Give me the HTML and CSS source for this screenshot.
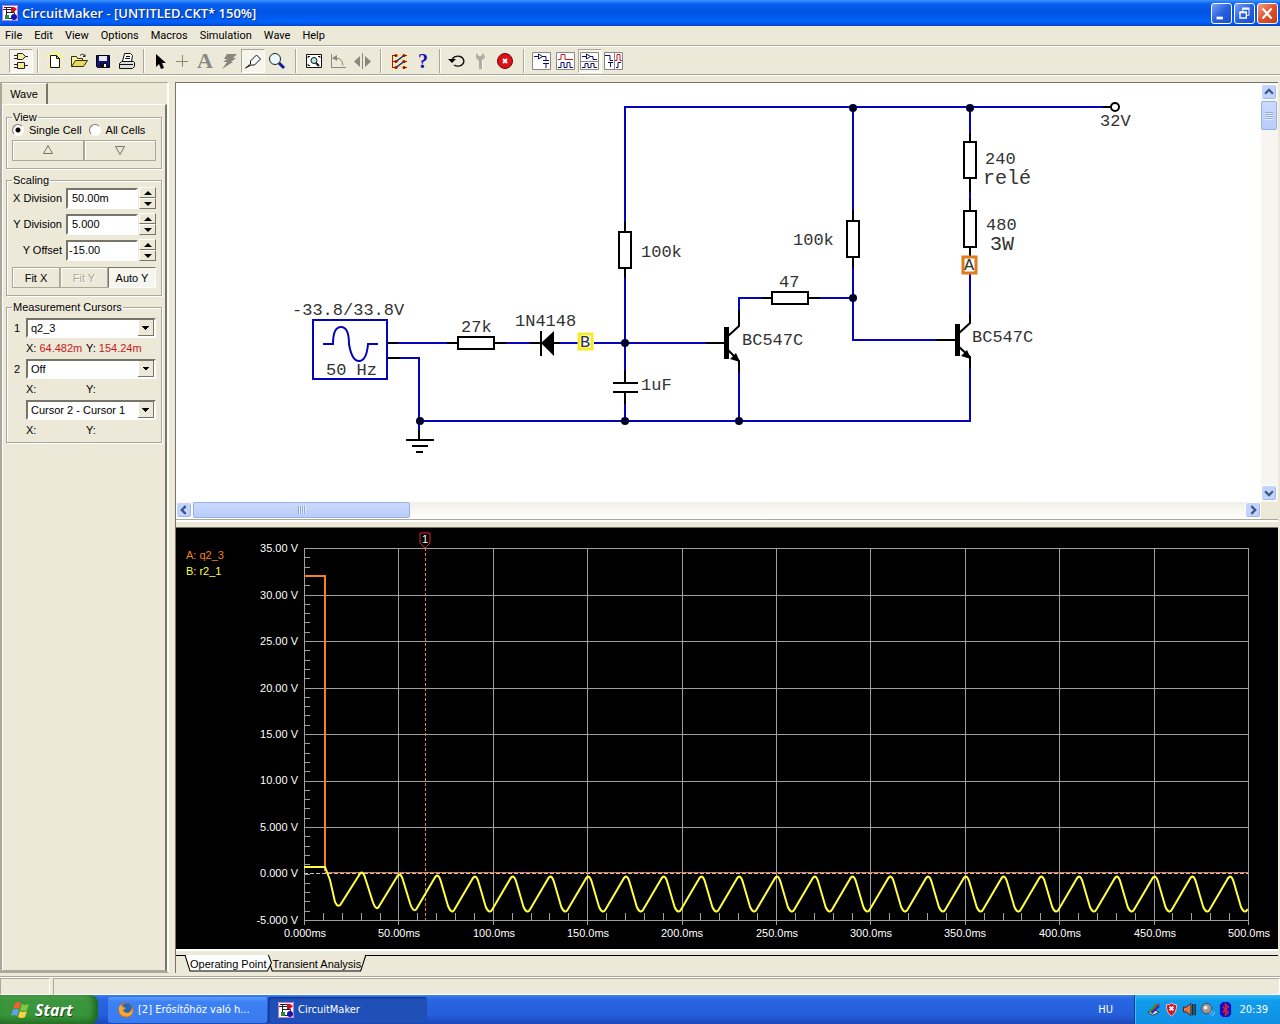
FILE: index.html
```html
<!DOCTYPE html>
<html lang="en">
<head>
<meta charset="utf-8">
<title>CircuitMaker - [UNTITLED.CKT* 150%]</title>
<link rel="stylesheet" href="styles.css">
</head>
<body>
<svg class="defs" aria-hidden="true">
  <symbol id="app-icon" viewBox="0 0 16 16">
    <path fill="#fff" d="M0 0h16v16H0z"/><path fill="none" stroke="#d070d0" d="M.5.5h15v15H.5z"/>
    <path fill="none" stroke="#222" d="M1 4.500h9M4.500 2v11M4 7.500h8.500v3M2 2.500h8M5 13.500h5"/>
    <path fill="#d01020" d="M9 2h3l3 2-3 3H9z"/><path fill="#189040" d="M3 10h4v4H3z"/><circle cx="12" cy="12" r="3" fill="#1018b0"/>
  </symbol>
</svg>
<div class="desktop">
  <header class="titlebar">
    <svg class="icon16" aria-hidden="true"><use href="#app-icon"/></svg>
    <h1>CircuitMaker - [UNTITLED.CKT* 150%]</h1>
    <button class="win" aria-label="Minimize"><svg viewBox="0 0 21 21"><path fill="#fff" d="M5 14h7v3H5z"/></svg></button>
    <button class="win" aria-label="Restore"><svg viewBox="0 0 21 21"><path fill="none" stroke="#fff" d="M8.500 8V5.500h7v7H13"/><path fill="#fff" d="M8 4h8v2H8zM5 8h8v2H5z"/><path fill="none" stroke="#fff" stroke-width="1.500" d="M5.500 9.500h7v6h-7z"/></svg></button>
    <button class="win close" aria-label="Close"><svg viewBox="0 0 21 21"><path stroke="#fff" stroke-width="2.400" d="M5 5l10 11M15 5L5 16"/></svg></button>
  </header>
  <nav class="menubar">
    <button>File</button><button>Edit</button><button>View</button><button>Options</button><button>Macros</button><button>Simulation</button><button>Wave</button><button>Help</button>
  </nav>
  <div class="toolbar" role="toolbar">
    <button class="pressed" aria-label="Parts"><svg viewBox="0 0 20 20"><g fill="#f4ee9a" stroke="#222"><path d="M6.500 2.500h5l3 3-3 3h-5z"/><path d="M6.500 11.500h7v6h-7z"/></g><path stroke="#222" d="M3 4.500h3M3 7.500h3M14 5.500h3M3 13.500h3M3 16.500h3M14 14.500h3"/></svg></button>
    <span class="sep"></span>
    <button aria-label="New"><svg viewBox="0 0 20 20"><path fill="#ffff60" d="M2 4h16v4H2zM6 1h8v3H6zM3 13h14v3H3z" opacity=".6"/><path fill="#fff" stroke="#111" d="M5.500 4.500h6l3 3v9h-9z"/><path fill="none" stroke="#111" d="M11.500 4.500v3h3"/></svg></button>
    <button aria-label="Open"><svg viewBox="0 0 20 20"><path fill="#fff39a" stroke="#33300a" d="M2.500 15.500v-10h5l1 2h5v2"/><path fill="#e8d860" stroke="#33300a" d="M2.500 15.500l4-6h12l-4 6z"/><path fill="none" stroke="#222" d="M11 4.500q3-3 5 1m0-2v2h-2"/></svg></button>
    <button aria-label="Save"><svg viewBox="0 0 20 20"><path fill="#101080" stroke="#000" d="M3.500 4.500h13v12h-12l-1-1z"/><path fill="#e8e8f0" d="M6 5h8v5H6z"/><path fill="#111" d="M7 12h7v5H7z"/><path fill="#eee" d="M11 13h2v3h-2z"/></svg></button>
    <button aria-label="Print"><svg viewBox="0 0 20 20"><path fill="#fff" stroke="#111" d="M5.500 10.500l2-8h6l2 2-1 6z"/><path fill="#ddd" stroke="#111" d="M2.500 12.500l2-2h12l1 1v4l-2 2h-13z"/><path stroke="#111" d="M2 13.500h14M9 5.500h4M8 7.500h5"/></svg></button>
    <span class="sep"></span>
    <button class="narrow" aria-label="Arrow"><svg viewBox="0 0 20 20"><path d="M6 3v13l3-3 2 5 3-1-2-5h4z"/></svg></button>
    <button class="narrow" aria-label="Wire"><svg viewBox="0 0 20 20"><path stroke="#8a887c" d="M4 10.500h12M10.500 4v12"/></svg></button>
    <button class="glyph" aria-label="Text">A</button>
    <button aria-label="Delete"><svg viewBox="0 0 20 20"><path fill="#8a887c" d="M8 3h10l-4 4h3l-5 4h2L3 18l5-7H4l4-3H5z"/></svg></button>
    <button class="pressed" aria-label="Probe"><svg viewBox="0 0 20 20"><path fill="#fff" stroke="#111" d="M2.500 17l5-4v-3l6-6 4 4-6 6H8z"/></svg></button>
    <button aria-label="Zoom"><svg viewBox="0 0 20 20"><circle cx="8" cy="8" r="5.500" fill="#e8fafa" stroke="#222"/><path stroke="#111c9c" stroke-width="3" d="M12 12l5 5"/></svg></button>
    <span class="sep wide"></span>
    <button aria-label="Fit to window"><svg viewBox="0 0 20 20"><path fill="#fff" stroke="#111" d="M2.500 3.500h15v13h-15z"/><path fill="none" stroke="#111" d="M4 7V5.500h2M14 5.500h2V7M4 13v1.500h2"/><circle cx="10" cy="9.500" r="3" fill="#b5e4e4" stroke="#111"/><path stroke="#111" stroke-width="2" d="M12 12l3 3"/></svg></button>
    <button aria-label="Rotate"><svg viewBox="0 0 20 20"><path fill="none" stroke="#8a887c" d="M3.500 3v13.500H18M5 7.500h6q4 2 4 7"/><path fill="#8a887c" d="M4 7l5-3v6z"/></svg></button>
    <button aria-label="Mirror"><svg viewBox="0 0 20 20"><path fill="#8a887c" d="M8 5v11l-6-5.500zM13 5v11l6-5.500z"/><path stroke="#8a887c" d="M10.500 2v16"/></svg></button>
    <span class="sep wide"></span>
    <button aria-label="Digital options"><svg viewBox="0 0 20 20"><path fill="#ffee60" opacity=".35" d="M2 2h16v16H2z"/><path fill="none" stroke="#b01020" d="M3.500 4v13M3 4.500h4M3 10.500h4M3 16.500h4M14 4.500h4M14 10.500h4M14 16.500h4"/><path stroke="#1520a8" stroke-width="1.500" d="M7 10.500l8-6M7 16.500l8-6"/><g fill="#901010"><circle cx="7" cy="4.500" r="1.500"/><circle cx="15" cy="4.500" r="1.500"/><circle cx="7" cy="10.500" r="1.500"/><circle cx="15" cy="10.500" r="1.500"/><circle cx="7" cy="16.500" r="1.500"/><circle cx="15" cy="16.500" r="1.500"/></g></svg></button>
    <button class="glyph help" aria-label="Help">?</button>
    <span class="sep"></span>
    <button aria-label="Reset"><svg viewBox="0 0 20 20"><path fill="none" stroke="#111" stroke-width="1.400" d="M5 9a6 5 0 1 1 2 5"/><path d="M1 8h8l-4 4z"/></svg></button>
    <button aria-label="Setup"><svg viewBox="0 0 20 20"><path fill="#b0aea2" d="M5 2l3 3h2l2-3 2 4-3 4v8H8v-8L5 7z"/><path stroke="#fff" d="M11.500 9v8"/></svg></button>
    <button aria-label="Stop"><svg viewBox="0 0 20 20"><circle cx="10" cy="10" r="7.500" fill="#e01018" stroke="#6a0808"/><path stroke="#fff" stroke-width="2" d="M8 8l4 4M12 8l-4 4"/></svg></button>
    <span class="sep wide"></span>
    <button aria-label="Schematic view"><svg viewBox="0 0 20 20"><path fill="#fff" stroke="#888" d="M.5 1.500h18v17H.5z"/><path fill="none" stroke="#101060" d="M2 5.500h4m4 0h4v4m-3 0h6M6.500 3v5l4-2.500zM11 12.500h6M14 12v5"/></svg></button>
    <button aria-label="Waveform view"><svg viewBox="0 0 20 20"><path fill="#fff" stroke="#888" d="M.5 1.500h18v17H.5z"/><path fill="none" stroke="#c01828" d="M2 8.500h3v-5h4v5h8"/><path fill="none" stroke="#101080" d="M2 16.500h3v-5h3v5h3v-5h3v5h3"/></svg></button>
    <button class="pressed" aria-label="Split horizontally"><svg viewBox="0 0 20 20"><path fill="#fff" stroke="#888" d="M.5 1.500h18v17H.5zM1 10.500h18"/><path fill="none" stroke="#101060" d="M2 5.500h4m4 0h3v3h4M6.500 3v5l4-2.500zM2 16.500h3v-4h3v4h3v-4h3v4h3"/></svg></button>
    <button aria-label="Split vertically"><svg viewBox="0 0 20 20"><path fill="#fff" stroke="#888" d="M.5 1.500h18v17H.5zM10.500 2v16"/><path fill="none" stroke="#101060" d="M1 4.500h5v5h3M4 11.500h5M6.500 11v5M12 16.500h2v-5h3"/><path fill="none" stroke="#c01828" d="M11 9.500h2v-6h3v6h2"/></svg></button>
  </div>

  <main class="workspace">
    <aside class="side">
      <div class="tabhead"><button role="tab" aria-selected="true">Wave</button></div>
      <form class="page">
        <fieldset class="view">
          <legend>View</legend>
          <div class="radios">
            <label><input type="radio" name="cells" checked>Single Cell</label>
            <label><input type="radio" name="cells">All Cells</label>
          </div>
          <div class="pair">
            <button type="button" aria-label="Up"><svg viewBox="0 0 12 10"><path fill="none" stroke="#77756a" d="M6 .5l4.500 8h-9z"/></svg></button>
            <button type="button" aria-label="Down"><svg viewBox="0 0 12 10"><path fill="none" stroke="#77756a" d="M6 9.500l4.500-8h-9z"/></svg></button>
          </div>
        </fieldset>
        <fieldset class="scaling">
          <legend>Scaling</legend>
          <div class="field"><label for="xd">X Division</label><input id="xd" value="50.00m"><span class="spin"><button type="button" aria-label="Increase X"></button><button type="button" class="dn" aria-label="Decrease X"></button></span></div>
          <div class="field"><label for="yd">Y Division</label><input id="yd" value="5.000"><span class="spin"><button type="button" aria-label="Increase Y"></button><button type="button" class="dn" aria-label="Decrease Y"></button></span></div>
          <div class="field"><label for="yo">Y Offset</label><input id="yo" class="tight" value="-15.00"><span class="spin"><button type="button" aria-label="Increase offset"></button><button type="button" class="dn" aria-label="Decrease offset"></button></span></div>
          <div class="pair fits"><button type="button">Fit X</button><button type="button" disabled>Fit Y</button><button type="button" class="on">Auto Y</button></div>
        </fieldset>
        <fieldset class="cursors">
          <legend>Measurement Cursors</legend>
          <label for="c1">1</label><select id="c1"><option>q2_3</option></select>
          <p class="xy"><span>X: <b>64.482m</b></span><span>Y: <b>154.24m</b></span></p>
          <label for="c2">2</label><select id="c2"><option>Off</option></select>
          <p class="xy"><span>X:</span><span>Y:</span></p>
          <select id="c3" aria-label="Difference"><option>Cursor 2 - Cursor 1</option></select>
          <p class="xy"><span>X:</span><span>Y:</span></p>
        </fieldset>
      </form>
    </aside>

    <section class="panes">
      <div class="schematic">
        <svg class="circuit" width="1085" height="419" viewBox="176 83 1085 419" role="img" aria-label="Circuit schematic">
          <g class="wire">
            <path d="M625 232V107H1103M853 107V212M970 107V134M853 267V340H940M820 298H853M739 310V298H762M625 278V372M555 343H578M594 343H710M396 343H447M505 343H530M388 358H419V430M419 421H970V364M739 368V421M625 402V421M970 274V316M970 190V200"/>
            <path d="M313 320h74v59h-74z"/>
            <path d="M323 344H333C333 332 336 327 341 327C346 327 349 332 349 344C351 356 354 361 359 361C364 361 367 356 368 344H378"/>
          </g>
          <g class="lead">
            <path d="M625 222V278M853 210V268M970 133V192M970 199V256M447 343H506M762 298H820M530 343H560M1103 107H1112M388 343H398M388 358H400M419 430V440M625 370V382M625 393V404M706 343H726M936 340H957"/>
            <path d="M613 383h25M613 392h25M406 440h28M412 446h16M416 452h7M541 331v25"/>
            <path d="M739 310V326L727 337M727 349L739 361V372M970 314V323L958 334M958 346L970 357V368"/>
            <path fill="#fff" d="M619 232h12v36h-12zM847 221h12v36h-12zM964 142h12v36h-12zM964 211h12v36h-12zM458 337h36v12h-36zM772 292h36v12h-36z"/>
            <circle cx="1115" cy="107" r="4" fill="#fff"/>
          </g>
          <path d="M541 343l13-12v25zM724 327h5v32h-5zM955 324h5v32h-5zM740 362l-10-3 6-6zM971 359l-10-3 6-6z"/>
          <g class="node"><circle cx="853" cy="108" r="4"/><circle cx="970" cy="108" r="4"/><circle cx="853" cy="298" r="4"/><circle cx="625" cy="343" r="4"/><circle cx="625" cy="421" r="4"/><circle cx="739" cy="421" r="4"/><circle cx="420" cy="421" r="4"/></g>
          <path class="probe-b" d="M579 334h13v15h-13z"/><path class="probe-a" d="M963 257h13v16h-13z"/>
          <g class="part">
            <text x="292" y="315">-33.8/33.8V</text><text x="326" y="375">50 Hz</text><text x="461" y="332">27k</text><text x="515" y="326">1N4148</text><text x="580" y="347">B</text><text x="641" y="257">100k</text><text x="641" y="390">1uF</text><text x="742" y="345">BC547C</text><text x="779" y="287">47</text><text x="793" y="245">100k</text><text x="985" y="164">240</text><text x="986" y="230">480</text><text x="964" y="270">A</text><text x="972" y="342">BC547C</text><text x="1100" y="126">32V</text>
            <text class="note" x="983" y="184">relé</text><text class="note" x="990" y="250">3W</text>
          </g>
        </svg>
        <div class="vscroll"><button class="arrow" aria-label="Scroll up"><svg viewBox="0 0 9 9"><path d="M1 6l3.500-3.500L8 6"/></svg></button><span class="thumb"></span><button class="arrow" aria-label="Scroll down"><svg viewBox="0 0 9 9"><path d="M1 3l3.500 3.500L8 3"/></svg></button></div>
        <div class="hscroll"><button class="arrow" aria-label="Scroll left"><svg viewBox="0 0 9 9"><path d="M6 1L2.500 4.500 6 8"/></svg></button><span class="thumb"></span><button class="arrow" aria-label="Scroll right"><svg viewBox="0 0 9 9"><path d="M3 1l3.500 3.500L3 8"/></svg></button></div>
      </div>
      <div class="splitter"></div>
      <div class="scope">
        <svg viewBox="176 528 1102 421" role="img" aria-label="Transient analysis plot">
          <path id="grid" class="grid"/>
          <path class="zero" d="M304 873H1248"/>
          <path class="trace-a" d="M304 576H325V871"/><path class="trace-a thin" d="M325 872H1248"/>
          <path class="cursor" d="M425 548V920"/>
          <path id="trace-b" class="trace-b"/>
          <path class="flag" d="M420 533h10v10l-5 5-5-5z"/>
          <g class="axis"><text x="422" y="543">1</text>
            <text class="a" x="186" y="559">A: q2_3</text><text class="b" x="186" y="575">B: r2_1</text>
            <g text-anchor="end"><text x="298" y="552">35.00 V</text><text x="298" y="599">30.00 V</text><text x="298" y="645">25.00 V</text><text x="298" y="692">20.00 V</text><text x="298" y="738">15.00 V</text><text x="298" y="784">10.00 V</text><text x="298" y="831">5.000 V</text><text x="298" y="877">0.000 V</text><text x="298" y="924">-5.000 V</text></g>
            <g text-anchor="middle"><text x="305" y="937">0.000ms</text><text x="399" y="937">50.00ms</text><text x="494" y="937">100.0ms</text><text x="588" y="937">150.0ms</text><text x="682" y="937">200.0ms</text><text x="777" y="937">250.0ms</text><text x="871" y="937">300.0ms</text><text x="965" y="937">350.0ms</text><text x="1060" y="937">400.0ms</text><text x="1155" y="937">450.0ms</text><text x="1249" y="937">500.0ms</text></g>
          </g>
        </svg>
      </div>
      <div class="sheets" role="tablist">
        <button role="tab" class="front"><svg viewBox="0 0 86 17" preserveAspectRatio="none"><path fill="#fff" stroke="none" d="M0 0h83l3 8-4 8H5z"/><path d="M0 0l5 16h77l4-8-3-8"/></svg>Operating Point</button>
        <button role="tab"><svg viewBox="0 0 95 17" preserveAspectRatio="none"><path fill="#ece9d8" stroke="none" d="M0 0h95l-5 16H5z"/><path d="M0 0l5 16h85l5-16"/></svg>Transient Analysis</button>
      </div>
    </section>
  </main>
  <div class="status"><span></span><span></span></div>
  <footer class="taskbar">
    <button class="start"><svg viewBox="0 0 20 20"><path fill="#f06030" d="M4 3q3-2 6 0L8 9Q5 7 2 9z"/><path fill="#80c840" d="M11 4q3 2 7 0l-2 6q-3 2-7 0z"/><path fill="#60a0f8" d="M2 10q3-2 6 0l-2 6q-3-2-6 0z"/><path fill="#fcd040" d="M9 11q3 2 7 0l-2 6q-3 2-7 0z"/></svg>Start</button>
    <button class="task"><svg class="icon16" viewBox="0 0 16 16"><circle cx="8" cy="8" r="7.500" fill="#e66a1c"/><circle cx="9" cy="6" r="5" fill="#2868b8"/><path fill="#f8a828" d="M1 5q1-2 2-2l2 2 3 1-3 2q1 3 4 3 4 0 5-5 2 6-3 8-8 2-10-5z"/></svg>[2] Erősítőhöz való h...</button>
    <button class="task active"><svg class="icon16" aria-hidden="true"><use href="#app-icon"/></svg>CircuitMaker</button>
    <span class="lang">HU</span>
    <div class="tray">
      <svg viewBox="0 0 16 16"><path fill="#eee" stroke="#333" d="M2 11l8-2 4 2-7 3z"/><path stroke="#e02020" stroke-width="2" d="M5 11l9-9"/><path stroke="#20a030" stroke-width="2" d="M4 10l7-8"/><path stroke="#2030c0" stroke-width="2" d="M6 12l8-8"/></svg>
      <svg viewBox="0 0 16 16"><path fill="#d01828" stroke="#f8c0c0" d="M2.500 3q4 0 5.500-2 2 2 5.500 2 0 9-5.500 12Q2.500 12 2.500 3z"/><path stroke="#fff" stroke-width="2" d="M6 5l4 4M10 5L6 9"/></svg>
      <svg viewBox="0 0 16 16"><path fill="#e87840" stroke="#402010" d="M1.500 5.500h3l5-4v13l-5-4h-3z"/><path fill="none" stroke="#222" stroke-width="1.500" d="M11.500 2v12M14 2v12"/></svg>
      <svg viewBox="0 0 16 16"><circle cx="7" cy="7" r="5.500" fill="#999" stroke="#444"/><circle cx="6" cy="6" r="2" fill="#eee"/><path fill="none" stroke="#9cf" d="M10 13q3-1 3-4M12 15q4-2 4-5"/></svg>
      <svg viewBox="0 0 16 16"><path fill="#1010c0" d="M5 0h6l3 3v10l-3 3H5l-3-3V3z"/><path fill="none" stroke="#e02030" stroke-width="1.500" d="M5 5l6 6-3 3V2l3 3-6 6"/></svg>
      <time>20:39</time>
    </div>
  </footer>
</div>
<script src="scope.js"></script>
</body>
</html>
```
FILE: scope.js
```js
// Plot frame of the oscilloscope view, in the drawing's own units.
const left = 304, right = 1248, top_ = 548, bottom = 920;
const colStep = (right - left) / 10, rowStep = (bottom - top_) / 8;

let grid = '';
for (let i = 0; i <= 10; i++) grid += `M${Math.round(left + i * colStep)} ${top_}V${bottom + 5}`;
for (let i = 0; i <= 8; i++) if (i !== 7) grid += `M${left} ${Math.round(top_ + i * rowStep)}H${right}`;
for (let i = 1; i < 50; i++) grid += `M${Math.round(left + i * colStep / 5)} ${bottom - 7}V${bottom}`;
for (let i = 1; i < 40; i++) grid += `M${left} ${Math.round(top_ + i * rowStep / 5)}h6`;
document.getElementById('grid').setAttribute('d', grid);

// Trace B: steep fall and slow rise every 20 ms.
const period = colStep * 0.4;
const troughs = [906, 909, 911, 912];
const peaks = [872, 874, 875, 876];
let wave = `M${left} 867H325L330 880L335 902`;
for (let k = 0; k < 25; k++) {
  const x = 338.5 + k * period;
  const low = troughs[Math.min(k, 3)], high = peaks[Math.min(k, 3)];
  wave += `Q${x} ${low + 3} ${x + 3} ${low - 3}`;
  if (k === 24) break;
  wave += `L${x + 20} ${high + 4}Q${x + 24} ${high - 4} ${x + 27} ${high + 7}L${x + 34} ${low - 5}`;
}
document.getElementById('trace-b').setAttribute('d', wave);
```
FILE: styles.css
```css
* { box-sizing: border-box; }
body { margin: 0; background: #ece9d8; color: #000; font: 11px/12px "Liberation Sans", Arial, sans-serif; }
button, input, select { font: inherit; color: inherit; margin: 0; padding: 0; }
button { border: 0; background: none; }
p, h1 { margin: 0; }
.defs { display: none; }
.icon16 { width: 16px; height: 16px; flex: none; }
.desktop { min-height: 100vh; display: flex; flex-direction: column; }

.titlebar { height: 26px; display: flex; align-items: center; gap: 2px; padding: 0 2px; background: linear-gradient(#3d95ff 0, #0a5ff0 4px, #0054e3 12px, #0062fc 22px, #0348c8 26px); }
.titlebar h1 { flex: 1; padding-left: 2px; color: #fff; font: 600 13px/20px "Open Sans", sans-serif; text-shadow: 1px 1px #0a2a80; }
.win { width: 21px; height: 21px; border: 1px solid #fff; border-radius: 3px; background: linear-gradient(135deg, #7da4f4, #2860e0 50%, #1c4cc8); }
.win svg { display: block; width: 19px; height: 19px; }
.close { background: linear-gradient(135deg, #f0a088, #e0502c 50%, #c43c14); }

.menubar { height: 20px; display: flex; gap: 12px; padding: 0 5px; border-bottom: 1px solid #aca899; }
.menubar button { font: 11px/18px Roboto, sans-serif; }

.toolbar { height: 29px; display: flex; align-items: center; padding-left: 9px; border-top: 1px solid #fff; border-bottom: 1px solid #aca899; }
.toolbar button { width: 24px; height: 24px; display: grid; place-items: center; flex: none; }
.toolbar .narrow { width: 22px; }
.toolbar svg { width: 20px; height: 20px; }
.toolbar .pressed { background: #f6f5ee; border: 1px solid; border-color: #aca899 #fff #fff #aca899; }
.toolbar .glyph { font: bold 22px/24px "Liberation Serif", serif; color: #8a887c; }
.toolbar .help { font-size: 20px; color: #1414b4; }
.sep { width: 2px; height: 24px; margin: 0 4px; border-left: 1px solid #aca899; border-right: 1px solid #fff; }
.sep.wide { margin: 0 5px 0 6px; }

.workspace { flex: 1; display: flex; gap: 6px; padding: 6px 2px 3px 0; border-top: 1px solid #fff; border-bottom: 1px solid #aca899; }
.side { width: 169px; flex: none; display: flex; flex-direction: column; border: 2px solid #aca899; border-top-width: 1px; border-right-color: #fff; }
.tabhead button { display: block; width: 46px; height: 21px; border-top: 1px solid #fff; border-right: 2px solid #77756a; }
.page { flex: 1; padding: 6px 3px; border: solid; border-width: 1px 2px 1px 1px; border-color: #fff #77756a #aca899 #fff; }
fieldset { margin: 0 0 5px; padding: 0 5px; border: 1px solid #aca899; box-shadow: 1px 1px #fff, inset 1px 1px #fff; min-width: 0; }
legend { padding: 0 1px; height: 12px; }
.view { height: 58px; }
.radios { display: flex; gap: 7px; margin: 1px 0 4px; }
.radios label { display: flex; align-items: center; gap: 5px; white-space: nowrap; }
.radios input { appearance: none; width: 12px; height: 12px; border-radius: 50%; border: 1px solid; border-color: #77756a #fff #fff #77756a; background: #fff; }
.radios input:checked { background: radial-gradient(#000 2px, #fff 3px); }
.pair { display: flex; height: 21px; }
.pair button { flex: 1; border: 1px solid; border-color: #fff #77756a #77756a #fff; outline: 1px solid #aca899; outline-offset: -1px; box-shadow: inset 1px 1px #fff; }
.pair svg { width: 12px; height: 10px; }
.scaling { height: 122px; }
.field { display: flex; align-items: center; height: 22px; margin: 1px 0 4px; }
.field label { width: 51px; text-align: right; white-space: nowrap; }
.field input { width: 72px; height: 21px; margin: 0 1px 0 4px; padding: 0 4px; border: 2px solid; border-color: #77756a #fff #fff #77756a; background: #fff; }
.field input.tight { padding: 0 1px; }
.spin { width: 17px; display: grid; flex: none; }
.spin button { height: 11px; border: 1px solid; border-color: #fff #77756a #77756a #fff; display: grid; place-items: center; }
.spin button::before { content: ""; border: solid transparent; border-width: 0 4px 4px; border-bottom-color: #000; }
.spin .dn::before { border-width: 4px 4px 0; border-top-color: #000; }
.fits { margin-top: 6px; }
.fits button:disabled { color: #aca899; text-shadow: 1px 1px #fff; }
.fits .on { background: #f6f5ee; border-color: #77756a #fff #fff #77756a; outline: 0; box-shadow: none; }
.cursors { height: 142px; display: grid; grid-template-columns: 14px 1fr; grid-template-rows: repeat(3, 21px 20px); align-items: center; padding-top: 4px; }
.cursors label { padding-left: 2px; }
.cursors select { grid-column: 2; height: 20px; padding: 0 3px; appearance: none; border: 2px solid; border-color: #77756a #fff #fff #77756a; border-radius: 0; background: conic-gradient(from -45deg at 50% 100%, #000 90deg, transparent 0) right 4px center / 8px 4px no-repeat, linear-gradient(#77756a, #77756a) right bottom / 16px 1px no-repeat, linear-gradient(90deg, #fff 1px, #ece9d8 1px 15px, #77756a 15px) right / 16px 100% no-repeat #fff; }
.xy { grid-column: 2; display: grid; grid-template-columns: 60px 1fr; white-space: nowrap; }
.xy b { font-weight: normal; color: #c81820; }
.cursors select { background-image: linear-gradient(to bottom left, #000 50%, transparent 50%), linear-gradient(to bottom right, #000 50%, transparent 50%), linear-gradient(#77756a, #77756a), linear-gradient(90deg, #fff 1px, #ece9d8 1px 15px, #77756a 15px); background-position: right 8px center, right 4px center, right bottom, right; background-size: 4px 4px, 4px 4px, 16px 1px, 16px 100%; background-repeat: no-repeat; }

.panes { flex: 1; min-width: 0; display: flex; flex-direction: column; border-left: 1px solid #77756a; border-top: 1px solid #77756a; }
.schematic { display: grid; grid-template-columns: minmax(0, 1fr) 17px; grid-template-rows: auto 17px; background: #fff; }
.circuit { display: block; font-family: "Liberation Mono", "Courier New", monospace; }
.wire { fill: none; stroke: #0404b8; stroke-width: 2; }
.lead { fill: none; stroke: #000; stroke-width: 2; }
.node { fill: #00002c; }
.part { font-size: 17px; fill: #333; }
.note { font-size: 20px; }
.probe-a, .probe-b { fill: #fff; stroke: #e07c18; stroke-width: 3; }
.probe-b { stroke: #f4ec28; }
.vscroll, .hscroll { display: flex; gap: 1px; background: #f6f5f0; }
.vscroll { flex-direction: column; padding: 1px 0; }
.hscroll { background: linear-gradient(#f0efe8, #fefefc); }
.schematic::after { content: ""; background: #ece9d8; grid-area: 2 / 2; }
.arrow { width: 16px; height: 16px; flex: none; display: grid; place-items: center; border: 1px solid #fff; border-radius: 3px; background: #c3d3fd; box-shadow: inset -1px -1px #9db8ec; }
.arrow:last-child { margin-left: auto; }
.vscroll .arrow:last-child { margin: auto 0 0; }
.arrow svg { width: 10px; height: 10px; fill: none; stroke: #3a5488; stroke-width: 2; }
.thumb { border: 1px solid #98b0e8; border-radius: 2px; background: linear-gradient(#cbdafe, #b8ccfa); display: grid; place-items: center; }
.thumb::before { content: ""; width: 8px; height: 8px; background: repeating-linear-gradient(90deg, #8ca8e4 0 1px, #e8f0ff 1px 2px); }
.vscroll .thumb { width: 16px; height: 29px; }
.vscroll .thumb::before { background: repeating-linear-gradient(#8ca8e4 0 1px, #e8f0ff 1px 2px); }
.hscroll .thumb { width: 20%; height: 16px; }
.splitter { height: 9px; border-top: 1px solid #aca899; border-bottom: 1px solid #77756a; box-shadow: inset 0 2px #fff; }

.scope { background: #000; }
.scope svg { display: block; width: 100%; height: auto; font-family: "Liberation Sans", Arial, sans-serif; font-size: 11px; }
.scope path { fill: none; }
.grid { stroke: #a0a0a0; shape-rendering: crispEdges; }
.zero { stroke: #c8c8c8; stroke-dasharray: 4 2; shape-rendering: crispEdges; }
.trace-a { stroke: #f08020; stroke-width: 2; }
.trace-a.thin { stroke: #e07850; stroke-width: 1; shape-rendering: crispEdges; }
.trace-b { stroke: #ffff40; stroke-width: 2; }
.scope .cursor { stroke: #f08030; stroke-dasharray: 3 2; shape-rendering: crispEdges; }
.flag { stroke: #e02038; }
.axis { fill: #fff; }
.a { fill: #f08020; }
.b { fill: #ffff40; }

.sheets { display: flex; height: 24px; padding: 0 0 0 9px; background: linear-gradient(#fff 0 2px, #ece9d8 2px 6px, #000 6px 7px, #ece9d8 7px); }
.sheets button { position: relative; height: 17px; margin-top: 6px; padding: 0 5px; white-space: nowrap; isolation: isolate; }
.sheets .front { z-index: 1; margin-right: -4px; }
.sheets svg { position: absolute; inset: 0; width: 100%; height: 100%; z-index: -1; fill: none; stroke: #000; overflow: visible; }

.status { height: 18px; display: flex; gap: 3px; border-top: 1px solid #fff; }
.status span { border: 1px solid; border-color: #aca899 #fff #fff #aca899; flex: 1; }
.status span:first-child { flex: 0 0 50px; }

.taskbar { height: 29px; display: flex; align-items: stretch; color: #fff; background: linear-gradient(#3a80f0 0, #2a66e0 4px, #245edc 20px, #1c48b8 29px); font: 11px/14px "DejaVu Sans Condensed", "DejaVu Sans", sans-serif; }
.start { width: 98px; display: flex; align-items: center; gap: 4px; padding-left: 11px; margin-right: 10px; border-radius: 0 8px 8px 0; background: linear-gradient(#5cb45c 0, #3c963c 6px, #389438 20px, #2c7a2c 29px); box-shadow: inset -4px 0 6px #1c641c; font: italic bold 16px/24px "Open Sans", sans-serif; text-shadow: 1px 1px #1a4a1a; }
.start svg { width: 20px; height: 20px; }
.task { width: 159px; display: flex; align-items: center; gap: 4px; margin: 2px 1px 1px 0; padding-left: 10px; border-radius: 3px; background: linear-gradient(#5a9cfc, #3c80f4 5px, #3a7cf0); white-space: nowrap; }
.task.active { background: #1e50b8; box-shadow: inset 1px 1px 2px #10307c; }
.lang { margin-left: auto; padding: 0 21px; align-self: center; }
.tray { min-width: 146px; display: flex; align-items: center; gap: 3px; padding: 0 12px 0 11px; border-left: 1px solid #0a3c94; background: linear-gradient(#30b8f8, #109cec 6px, #1090e4); box-shadow: inset 1px 0 #40c0f8; }
.tray svg { width: 15px; height: 15px; flex: none; }
.tray time { margin-left: auto; }
```
